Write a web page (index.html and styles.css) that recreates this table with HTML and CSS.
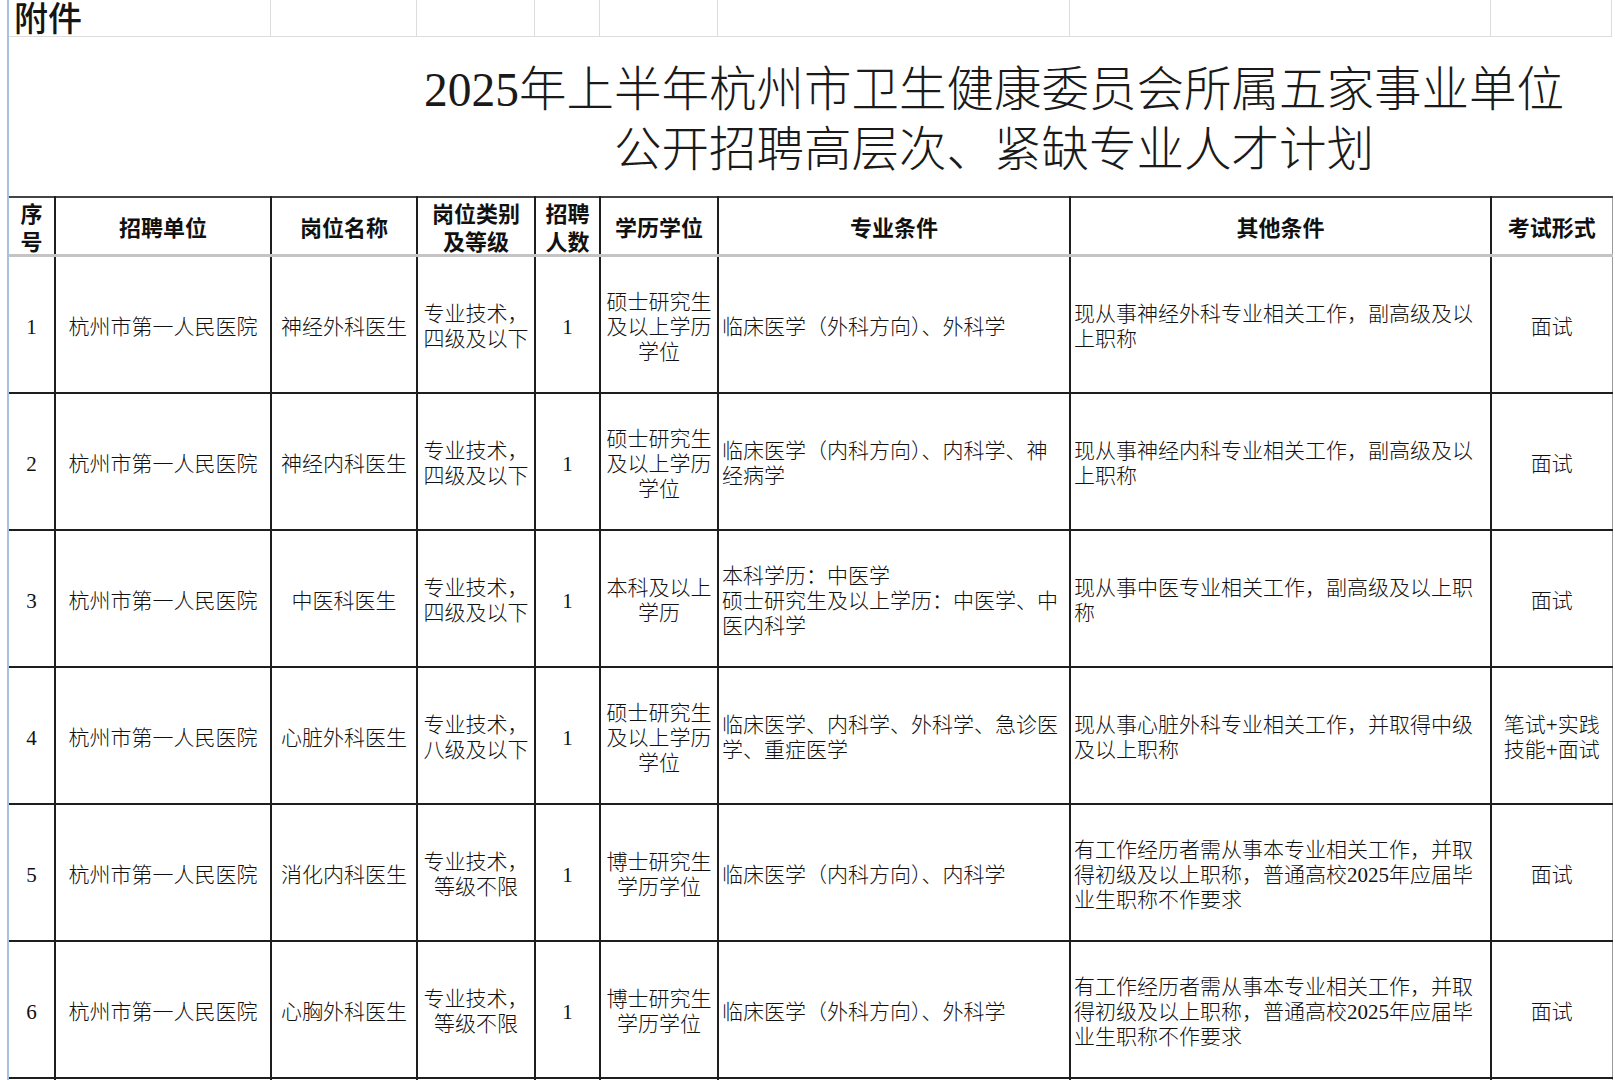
FILE: index.html
```html
<!DOCTYPE html>
<html lang="zh-CN">
<head>
<meta charset="utf-8">
<title>附件</title>
<link rel="stylesheet" href="styles.css">
</head>
<body>
<div class="sheet">
  <div class="toprow">
    <div class="tc tc-a">附件</div>
    <div class="tc"></div>
    <div class="tc"></div>
    <div class="tc"></div>
    <div class="tc"></div>
    <div class="tc"></div>
    <div class="tc"></div>
    <div class="tc"></div>
  </div>
  <div class="title">
    <div class="title-text">2025年上半年杭州市卫生健康委员会所属五家事业单位<br>公开招聘高层次、紧缺专业人才计划</div>
  </div>
  <table class="plan">
    <colgroup>
      <col class="c1"><col class="c2"><col class="c3"><col class="c4"><col class="c5"><col class="c6"><col class="c7"><col class="c8"><col class="c9">
    </colgroup>
    <thead>
      <tr>
        <th>序号</th><th>招聘单位</th><th>岗位名称</th><th>岗位类别及等级</th><th>招聘人数</th><th>学历学位</th><th>专业条件</th><th>其他条件</th><th>考试形式</th>
      </tr>
    </thead>
    <tbody>
      <tr>
        <td>1</td><td>杭州市第一人民医院</td><td>神经外科医生</td><td>专业技术，四级及以下</td><td>1</td><td>硕士研究生及以上学历学位</td>
        <td class="l">临床医学（外科方向）、外科学</td>
        <td class="l">现从事神经外科专业相关工作，副高级及以上职称</td><td>面试</td>
      </tr>
      <tr>
        <td>2</td><td>杭州市第一人民医院</td><td>神经内科医生</td><td>专业技术，四级及以下</td><td>1</td><td>硕士研究生及以上学历学位</td>
        <td class="l">临床医学（内科方向）、内科学、神经病学</td>
        <td class="l">现从事神经内科专业相关工作，副高级及以上职称</td><td>面试</td>
      </tr>
      <tr>
        <td>3</td><td>杭州市第一人民医院</td><td>中医科医生</td><td>专业技术，四级及以下</td><td>1</td><td>本科及以上学历</td>
        <td class="l">本科学历：中医学<br>硕士研究生及以上学历：中医学、中医内科学</td>
        <td class="l">现从事中医专业相关工作，副高级及以上职称</td><td>面试</td>
      </tr>
      <tr>
        <td>4</td><td>杭州市第一人民医院</td><td>心脏外科医生</td><td>专业技术，八级及以下</td><td>1</td><td>硕士研究生及以上学历学位</td>
        <td class="l">临床医学、内科学、外科学、急诊医学、重症医学</td>
        <td class="l">现从事心脏外科专业相关工作，并取得中级及以上职称</td><td>笔试+实践技能+面试</td>
      </tr>
      <tr>
        <td>5</td><td>杭州市第一人民医院</td><td>消化内科医生</td><td>专业技术，等级不限</td><td>1</td><td>博士研究生学历学位</td>
        <td class="l">临床医学（内科方向）、内科学</td>
        <td class="l">有工作经历者需从事本专业相关工作，并取得初级及以上职称，普通高校2025年应届毕业生职称不作要求</td><td>面试</td>
      </tr>
      <tr>
        <td>6</td><td>杭州市第一人民医院</td><td>心胸外科医生</td><td>专业技术，等级不限</td><td>1</td><td>博士研究生学历学位</td>
        <td class="l">临床医学（外科方向）、外科学</td>
        <td class="l">有工作经历者需从事本专业相关工作，并取得初级及以上职称，普通高校2025年应届毕业生职称不作要求</td><td>面试</td>
      </tr>
      <tr>
        <td></td><td></td><td></td><td></td><td></td><td></td><td class="l"></td><td class="l"></td><td></td>
      </tr>
    </tbody>
  </table>
</div>
</body>
</html>
```

FILE: styles.css
```css
html, body {
  margin: 0;
  padding: 0;
  background: #ffffff;
}

body {
  width: 1615px;
  height: 1080px;
  overflow: hidden;
  color: #111111;
  font-family: "Liberation Serif", "Noto Sans CJK SC", serif;
}

.sheet {
  margin-left: 7px;
  width: 1603px;
  min-height: 1080px;
  border-left: 2px solid #a9c0e2;
}

/* top spreadsheet row with the "附件" label */
.toprow {
  display: grid;
  grid-template-columns: 262px 146px 118px 65px 118px 352px 421px 121px;
  height: 36px;
  border-bottom: 1px solid #dcdcdc;
}

.tc {
  border-right: 1px solid #dcdcdc;
}

.tc-a {
  font-family: "Liberation Sans", "Noto Sans CJK SC", sans-serif;
  font-size: 34px;
  line-height: 34px;
  padding-top: 2px;
  font-weight: 500;
  padding-left: 5px;
  white-space: nowrap;
  color: #151515;
}

/* merged title area */
.title {
  height: 159px;
  box-sizing: border-box;
  padding-left: 367px;
  padding-top: 23px;
  display: flex;
  justify-content: center;
  align-items: flex-start;
}

.title-text {
  font-family: "Liberation Serif", "Noto Sans CJK SC", serif;
  font-size: 47.5px;
  line-height: 60px;
  font-weight: 300;
  text-align: center;
  white-space: nowrap;
  color: #1a1a1a;
}

/* main table */
.plan {
  border-collapse: collapse;
  table-layout: fixed;
  width: 1603px;
}

.c1 { width: 46px; }
.c2 { width: 216px; }
.c3 { width: 146px; }
.c4 { width: 118px; }
.c5 { width: 65px; }
.c6 { width: 118px; }
.c7 { width: 352px; }
.c8 { width: 421px; }
.c9 { width: 121px; }

.plan th,
.plan td {
  border: 2px solid #1e1e1e;
  padding: 0 4px;
  text-align: center;
  vertical-align: middle;
  overflow: hidden;
}

.plan tr > :first-child {
  border-left: none;
}

.plan tr > :last-child {
  border-right: 1px solid #9a9a9a;
}

.plan thead tr {
  height: 57px;
}

.plan th {
  font-family: "Noto Sans CJK SC", sans-serif;
  font-weight: 700;
  font-size: 22px;
  line-height: 28px;
  color: #111111;
  border-top-color: #444444;
  border-bottom: 3px solid #c4c4c4;
}

.plan tbody tr {
  height: 137px;
}

.plan td {
  font-size: 21px;
  line-height: 25px;
  font-weight: 300;
  padding-top: 6px;
}

.plan td.l {
  text-align: left;
  padding-left: 3px;
  padding-right: 3px;
}
```
